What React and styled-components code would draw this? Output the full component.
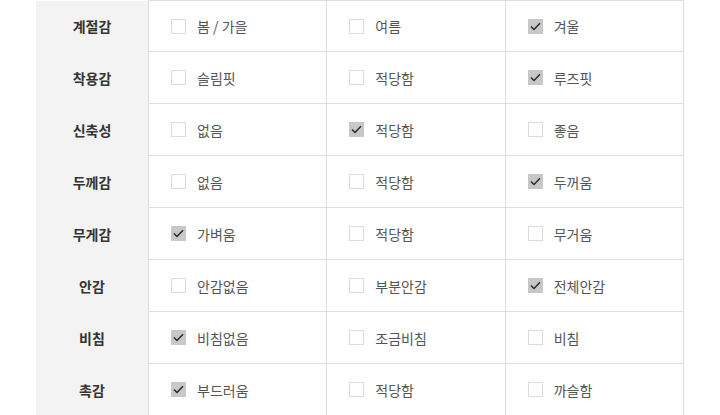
import React from 'react';
import styled, { createGlobalStyle } from 'styled-components';

const GlobalStyle = createGlobalStyle`
  body {
    margin: 0;
    background: #fff;
    font-family: 'Noto Sans CJK KR', 'Noto Sans', sans-serif;
  }
`;

const Wrap = styled.div`
  padding-left: 36px;
`;

const Table = styled.table`
  width: 648px;
  border-collapse: collapse;
  table-layout: fixed;

  tr:first-child > * {
    height: 50px;
  }
`;

const Label = styled.th`
  width: 112px;
  height: 51px;
  padding: 0;
  background: #f3f3f3;
  color: #333;
  font-size: 14px;
  font-weight: 700;
  text-align: center;
  vertical-align: middle;
`;

const Cell = styled.td`
  height: 51px;
  padding: 0 0 0 22px;
  border: 1px solid #dedede;
  vertical-align: middle;
`;

const Option = styled.label`
  display: flex;
  align-items: center;
  gap: 11px;
  color: #555;
  font-size: 14px;
`;

const Box = styled.span`
  width: 15px;
  height: 15px;
  box-sizing: border-box;
  border: 1px solid ${p => (p.$checked ? '#c8c8c8' : '#dcdcdc')};
  background: ${p => (p.$checked ? '#c8c8c8' : '#fff')};
  display: flex;
  align-items: center;
  justify-content: center;
`;

const rows = [
  { label: '계절감', options: ['봄 / 가을', '여름', '겨울'], checked: 2 },
  { label: '착용감', options: ['슬림핏', '적당함', '루즈핏'], checked: 2 },
  { label: '신축성', options: ['없음', '적당함', '좋음'], checked: 1 },
  { label: '두께감', options: ['없음', '적당함', '두꺼움'], checked: 2 },
  { label: '무게감', options: ['가벼움', '적당함', '무거움'], checked: 0 },
  { label: '안감', options: ['안감없음', '부분안감', '전체안감'], checked: 2 },
  { label: '비침', options: ['비침없음', '조금비침', '비침'], checked: 0 },
  { label: '촉감', options: ['부드러움', '적당함', '까슬함'], checked: 0 },
];

function Check({ checked }) {
  return (
    <Box $checked={checked}>
      {checked && (
        <svg width="11" height="9" viewBox="0 0 11 9">
          <path d="M1 4.5 L4 7.5 L10 1.2" fill="none" stroke="#2a2a2a" strokeWidth="1.5" />
        </svg>
      )}
    </Box>
  );
}

export default function App() {
  return (
    <Wrap>
      <GlobalStyle />
      <Table>
        <tbody>
          {rows.map(row => (
            <tr key={row.label}>
              <Label>{row.label}</Label>
              {row.options.map((opt, i) => (
                <Cell key={opt + i}>
                  <Option>
                    <Check checked={row.checked === i} />
                    {opt}
                  </Option>
                </Cell>
              ))}
            </tr>
          ))}
        </tbody>
      </Table>
    </Wrap>
  );
}
